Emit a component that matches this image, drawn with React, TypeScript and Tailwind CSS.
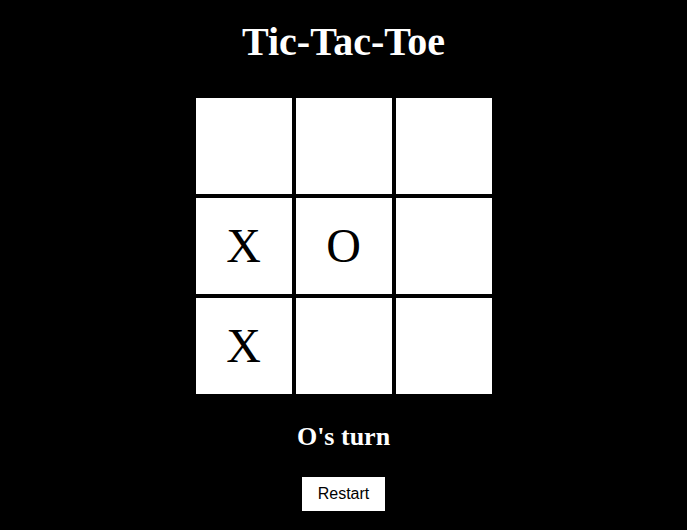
import { useState } from "react";

type Cell = "X" | "O" | null;

const START: Cell[] = [null, null, null, "X", "O", null, "X", null, null];

export default function App() {
  const [board, setBoard] = useState<Cell[]>(START);
  const [turn, setTurn] = useState<"X" | "O">("O");

  function play(i: number) {
    if (board[i]) return;
    const next = board.slice();
    next[i] = turn;
    setBoard(next);
    setTurn(turn === "X" ? "O" : "X");
  }

  function restart() {
    setBoard(Array(9).fill(null));
    setTurn("X");
  }

  return (
    <div className="flex min-h-screen flex-col items-center bg-black font-['Liberation_Serif',serif] text-white">
      <h1 className="mt-[19px] text-[40px] font-bold leading-[46px]">Tic-Tac-Toe</h1>

      <div className="mt-[33px] grid grid-cols-[repeat(3,96px)] gap-1">
        {board.map((cell, i) => (
          <button
            key={i}
            onClick={() => play(i)}
            className="flex h-[96px] w-[96px] items-center justify-center bg-white font-['Liberation_Serif',serif] text-[48px] leading-none text-black"
          >
            {cell}
          </button>
        ))}
      </div>

      <h2 className="mt-[28px] text-[26px] font-bold leading-[30px]">{turn}'s turn</h2>

      <button
        onClick={restart}
        className="mt-[25px] bg-white px-4 py-2 font-['Liberation_Sans',Arial,sans-serif] text-base leading-[18px] text-black"
      >
        Restart
      </button>
    </div>
  );
}
